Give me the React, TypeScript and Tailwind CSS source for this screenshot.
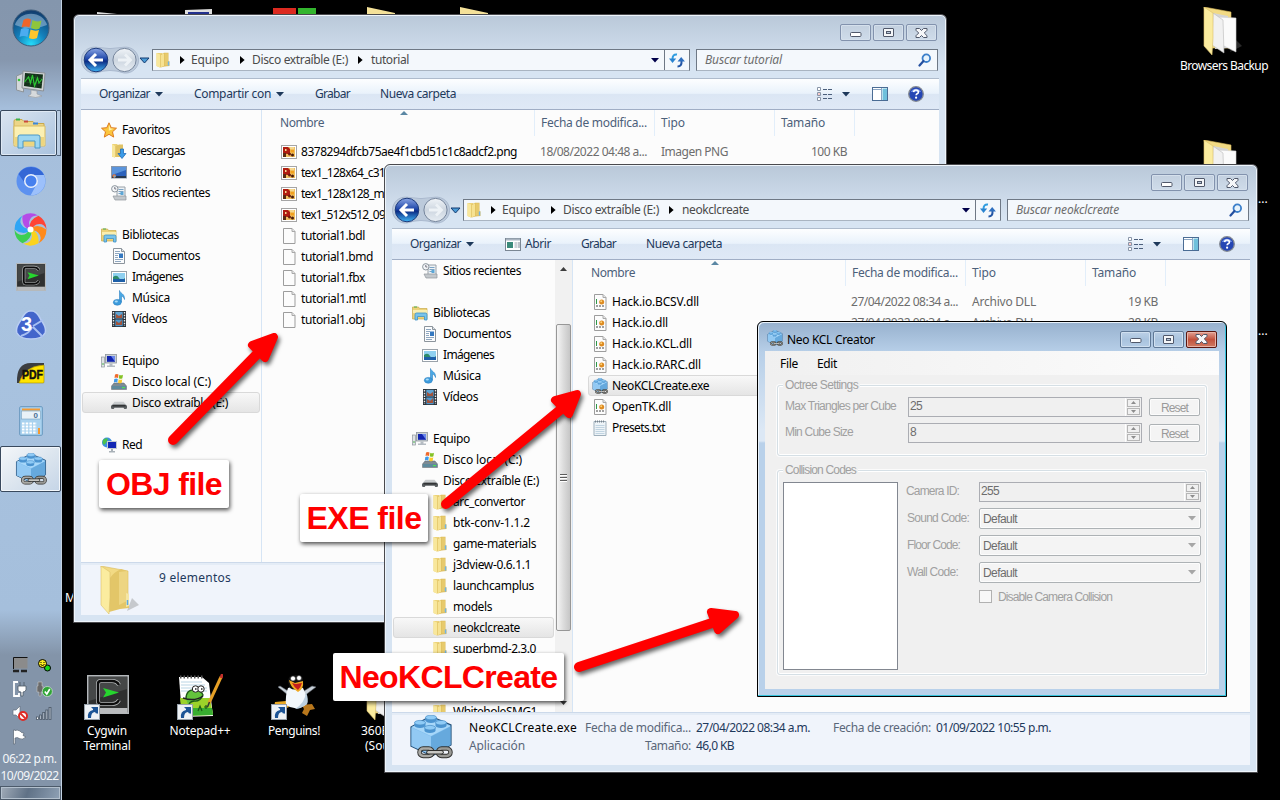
import React, { useLayoutEffect, useRef, useState } from "react";

/* Text set to an exact advance width by spreading the difference over its letters. */
function T({ w, className = "", children }: { w?: number; className?: string; children: string }) {
  const ref = useRef<HTMLSpanElement>(null);
  const [ls, setLs] = useState(0);
  useLayoutEffect(() => {
    if (!w || !ref.current) return;
    const natural = ref.current.getBoundingClientRect().width - ls * children.length;
    setLs((w - natural) / children.length);
  }, [w, children]);
  return (
    <span ref={ref} className={`inline-block shrink-0 whitespace-pre ${className}`} style={{ letterSpacing: ls }}>
      {children}
    </span>
  );
}

/* ---------- small icons ---------- */

const Folder = ({ s = 16 }: { s?: number }) => (
  <svg width={s} height={s} viewBox="0 0 16 16" className="shrink-0">
    <path d="M1.500 1h5.500v13.500L5 15.500 1.500 14z" fill="#ecd278" />
    <path d="M1.500 1L5 2.500v13L1.500 14z" fill="#f8e79c" />
    <path d="M5.500 2.500L9 .8h4.500v8.500h1V14l-5 .5-4 1z" fill="#dcbb5a" />
    <path d="M5.800 3L9 1.300V14l-3.200 1.300z" fill="#f6e292" />
    <path d="M9.500 1.300H13V13.500H9.500z" fill="#e7ca6c" />
    <path d="M12.800 9.500h1.400v4h-1.400z" fill="#6fb4e6" />
  </svg>
);

const Star = () => (
  <svg width="16" height="16" viewBox="0 0 16 16" className="shrink-0">
    <path d="M8 .8l2.200 4.900 5.300.5-4 3.600 1.200 5.300L8 12.300l-4.700 2.800 1.200-5.300-4-3.600 5.300-.5z" fill="#fbc63e" stroke="#dd7a1e" strokeWidth="1" />
    <path d="M8 2.800l1.400 3.600 3.400.3-5 2z" fill="#fff0a8" />
  </svg>
);

const Download = () => (
  <svg width="16" height="16" viewBox="0 0 16 16" className="shrink-0">
    <path d="M1 1h5l1 1h5v12H1z" fill="#ecd278" />
    <path d="M1 1l3 2v12l-3-1.500z" fill="#f8e79c" />
    <path d="M4.500 3L8 1.500h4V14H4.500z" fill="#e0c264" />
    <path d="M9.500 6h3v4.500H15l-4 5-4-5h2.500z" fill="#3b9be8" stroke="#1f6cb8" strokeWidth=".8" />
  </svg>
);

const Desktop = () => (
  <svg width="16" height="16" viewBox="0 0 16 16" className="shrink-0">
    <rect x=".5" y="2.500" width="15" height="11.500" fill="#2b61bb" stroke="#8a97a8" />
    <path d="M1 3h14v3L1 11z" fill="#5a94dc" />
    <rect x="1" y="12" width="14" height="2" fill="#27384f" />
    <circle cx="3.200" cy="12" r="1.800" fill="#ef7b35" />
    <circle cx="3.600" cy="12.500" r=".9" fill="#56b6f2" />
  </svg>
);

const Recent = () => (
  <svg width="16" height="16" viewBox="0 0 16 16" className="shrink-0">
    <path d="M6 2h8v11H6z" fill="#eef2f5" stroke="#98a0a8" />
    <path d="M7.500 4.500h5M7.500 6.500h5M7.500 8.500h3" stroke="#7ba3c4" />
    <rect x="9.500" y="7" width="3" height="3" fill="#5da7d6" />
    <path d="M2 11h13v4H4z" fill="#c3c8cc" stroke="#8f969c" strokeWidth=".7" />
    <circle cx="3.800" cy="3.800" r="3.200" fill="#f4f6f8" stroke="#8b949c" />
    <path d="M3.800 2v2h1.500" stroke="#556" fill="none" strokeWidth=".8" />
  </svg>
);

const Library = () => (
  <svg width="16" height="16" viewBox="0 0 16 16" className="shrink-0">
    <path d="M.5 2h6l1 1.500H15V14H.5z" fill="#ecd279" stroke="#c9aa4a" strokeWidth=".7" />
    <path d="M2 2h3" stroke="#4caf50" />
    <path d="M1 5h14v3H1z" fill="#faeeb0" />
    <path d="M3 15V9.500Q3 8 4.500 8h9Q15 8 15 9.500V15h-2.500v-3.500h-7V15z" fill="#79c3ea" stroke="#3f92c6" strokeWidth=".8" />
  </svg>
);

const Doc = () => (
  <svg width="16" height="16" viewBox="0 0 16 16" className="shrink-0">
    <path d="M2.500.5h8l3 3v12h-11z" fill="#fbfcfd" stroke="#8c949c" />
    <path d="M10.500.5v3h3" fill="#dde3e8" stroke="#8c949c" />
    <path d="M4 3.500h5M4 5.500h4M4 7.500h3M4 9.500h3M4 11.500h8M4 13.500h6" stroke="#8fa7c0" />
    <rect x="8" y="5.500" width="4" height="4.500" fill="#3478c0" />
  </svg>
);

const Picture = () => (
  <svg width="16" height="16" viewBox="0 0 16 16" className="shrink-0">
    <rect x=".5" y="2.500" width="15" height="12" fill="#fff" stroke="#9aa2aa" />
    <rect x="2" y="4" width="12" height="9" fill="#8fd0f0" />
    <path d="M2 8q4-3 6 1t6 0v1H2z" fill="#2c8a6a" />
    <path d="M2 10h12v3H2z" fill="#1d5fa8" />
  </svg>
);

const Music = () => (
  <svg width="16" height="16" viewBox="0 0 16 16" className="shrink-0">
    <path d="M8.500.5c.5 3 5.500 3 5 9-.6-2-1.500-3-3-3.200V12h-2z" fill="#4aa8e4" stroke="#2b82c2" strokeWidth=".6" />
    <ellipse cx="6.300" cy="12.300" rx="4" ry="2.900" fill="#3d9bdc" stroke="#2b82c2" strokeWidth=".6" />
    <ellipse cx="5.300" cy="11.500" rx="1.600" ry="1" fill="#a8dbf8" />
  </svg>
);

const Video = () => (
  <svg width="16" height="16" viewBox="0 0 16 16" className="shrink-0">
    <rect x="1" y="0" width="14" height="16" fill="#2c3238" />
    <path d="M2.500 1v14M13.500 1v14" stroke="#e8ecef" strokeDasharray="1.500 1.200" strokeWidth="1.400" />
    <rect x="4.300" y=".8" width="7.400" height="6.700" fill="#5fa4d4" />
    <rect x="4.300" y="8.500" width="7.400" height="6.700" fill="#4f98cc" />
    <path d="M5 3l3 2 3-2v4H5zM5 10l3 2 3-3v5H5z" fill="#a2543c" />
  </svg>
);

const Computer = () => (
  <svg width="16" height="16" viewBox="0 0 16 16" className="shrink-0">
    <rect x=".5" y="4" width="3" height="10" fill="#dfe3e6" stroke="#8d959c" strokeWidth=".7" />
    <circle cx="2" cy="11" r=".8" fill="#3aad3a" />
    <rect x="4.500" y="1.500" width="11" height="8.500" fill="#c9d0d6" stroke="#8d959c" strokeWidth=".8" />
    <rect x="6" y="3" width="8" height="5.800" fill="#1225b0" />
    <path d="M10 3h4v5.800z" fill="#6a86ea" />
    <path d="M8.500 10.500h3v2h2.500v1.500H6v-1.500h2.500z" fill="#b4bbc2" />
  </svg>
);

const Drive = ({ win }: { win?: boolean }) => (
  <svg width="16" height="16" viewBox="0 0 16 16" className="shrink-0">
    {win ? (
      <>
        <path d="M3 9h10l2.500 3v3.500H.5V12z" fill="#7d8b94" stroke="#5c676e" strokeWidth=".5" />
        <path d="M1 12h14v3H1z" fill="#5f8a9c" />
        <rect x="11" y="13" width="3" height="1.200" fill="#52e052" />
        <path d="M4 .5q2-1 3.500 0L7 4q-2-1-3.500 0z" fill="#ef6a2c" />
        <path d="M8.300.8q2 1 3.700 0l-.6 3.500q-1.700 1-3.600 0z" fill="#84c225" />
        <path d="M3.300 5q2-1 3.500 0l-.5 3.500q-2-1-3.500 0z" fill="#3f9bea" />
        <path d="M7.600 5.300q2 1 3.700 0l-.6 3.500q-1.700 1-3.600 0z" fill="#fbca2d" />
      </>
    ) : (
      <>
        <path d="M3.500 6.800h9l3 3.500H.5z" fill="#c9ccce" />
        <path d="M0 11q.5-1.500 2.500-1.500h11Q15.500 9.500 16 11v2q0 1-1.500 1h-1.200l-.8-1.200H3.500L2.700 14H1.500Q0 14 0 13z" fill="#5a5e61" />
        <path d="M1.500 10.800h13" stroke="#2b2d2f" strokeWidth="1.300" />
      </>
    )}
  </svg>
);

const Network = () => (
  <svg width="16" height="16" viewBox="0 0 16 16" className="shrink-0">
    <circle cx="6" cy="5.500" r="5" fill="#3c8fe0" />
    <path d="M2 3q3-3 5-1L5 6 3 8 1.500 6z" fill="#4cc24c" />
    <rect x="6.500" y="4.500" width="9" height="7" fill="#1428b4" stroke="#c5ccd2" />
    <path d="M10 12h2v2h2v1.500H8V14h2z" fill="#a9b1b8" />
  </svg>
);

const Png = () => (
  <svg width="16" height="16" viewBox="0 0 16 16" className="shrink-0">
    <rect x=".5" y="1.500" width="15" height="13" fill="#fff" stroke="#a5a5a5" />
    <rect x="2" y="3" width="12" height="10" fill="#f0c060" />
    <path d="M2 3h5l2 2v5H6L2 9z" fill="#b01c10" />
    <path d="M2 9h3v4H2z" fill="#5a2a10" />
    <circle cx="11.500" cy="11" r="1.500" fill="#4a1c08" />
    <circle cx="8.500" cy="10" r="1.500" fill="#6d1a0c" />
    <path d="M4 5h1.500v2H4zM9 3h4v2H9z" fill="#f6d890" />
    <path d="M9.500 6h3.500v2.500H9.500z" fill="#f2a01e" />
  </svg>
);

const Blank = () => (
  <svg width="16" height="16" viewBox="-1 0 16 16" className="shrink-0">
    <path d="M1.500.5h8.500l3 3v12H1.500z" fill="#fcfcfc" stroke="#9d9d9d" />
    <path d="M10 .5v3h3" fill="#e6e6e6" stroke="#a8a8a8" />
  </svg>
);

const Dll = () => (
  <svg width="16" height="16" viewBox="-1 0 16 16" className="shrink-0">
    <path d="M1.500.5h8.500l3 3v12H1.500z" fill="#fcfcfc" stroke="#9d9d9d" />
    <path d="M10 .5v3h3" fill="#e6e6e6" stroke="#a8a8a8" />
    <path d="M3.500 5v5" stroke="#2f9a48" />
    <path d="M3 12h9" stroke="#444" strokeDasharray="2 1" />
    <circle cx="8.700" cy="8" r="2.500" fill="#dd8a20" />
    <circle cx="8.200" cy="7.200" r="1" fill="#fbd27a" />
  </svg>
);

const Txt = () => (
  <svg width="16" height="16" viewBox="0 0 16 16" className="shrink-0">
    <path d="M2 1.500h12v14H2z" fill="#eef4f8" stroke="#9fb0bc" />
    <path d="M3 1.500h10" stroke="#77828c" strokeDasharray="1 1" strokeWidth="2" />
    <path d="M3.500 5.500h9M3.500 7.500h9M3.500 9.500h9M3.500 11.500h9M3.500 13.500h9" stroke="#b5ccdb" strokeWidth=".8" />
  </svg>
);

const Lego = ({ s }: { s: number }) => (
  <svg width={s} height={s} viewBox="0 0 44 44" className="shrink-0">
    <path d="M2 12L18 3h8l16 7v20L23 41 2 31z" fill="#7fbdee" stroke="#24527c" strokeWidth="1.200" />
    <path d="M2.500 12.500l19.500 9V40L2.500 31z" fill="#92c9f3" />
    <path d="M22 21.500l19.500-10V30L22 40.500z" fill="#66a9dd" />
    <path d="M2.500 12L21 3.500l20.500 7.500L22 21z" fill="#a7d7f9" />
    {[[22, 3.800], [11, 9], [32, 9], [21, 14]].map(([x, y]) => (
      <g key={`${x}-${y}`}>
        <path d={`M${x - 5.500} ${y - 1.500}v3a5.500 2.600 0 0 0 11 0v-3z`} fill="#4b94d0" />
        <ellipse cx={x} cy={y - 1.300} rx="5.500" ry="2.300" fill="#8fcbf6" stroke="#4b8fc9" strokeWidth=".7" />
      </g>
    ))}
    <g fill="none">
      <rect x="10.500" y="33.500" width="13" height="7.500" rx="3.700" stroke="#30302e" strokeWidth="4.500" />
      <rect x="29" y="33.500" width="12.500" height="7.500" rx="3.700" stroke="#30302e" strokeWidth="4.500" />
      <rect x="10.500" y="33.500" width="13" height="7.500" rx="3.700" stroke="#a9a9a5" strokeWidth="2.700" />
      <rect x="29" y="33.500" width="12.500" height="7.500" rx="3.700" stroke="#999995" strokeWidth="2.700" />
      <path d="M19.500 37.200h13" stroke="#30302e" strokeWidth="4.500" strokeLinecap="round" />
      <path d="M19.500 37.200h13" stroke="#c8c8c4" strokeWidth="2.500" strokeLinecap="round" />
    </g>
  </svg>
);

const Tri = ({ c = "#1e395b" }: { c?: string }) => (
  <svg width="8" height="5" viewBox="0 0 8 5" className="shrink-0">
    <path d="M0 0h8L4 4.600z" fill={c} />
  </svg>
);

const Crumb = () => (
  <svg width="5" height="8" viewBox="0 0 5 8" className="shrink-0">
    <path d="M0 0l4.600 4L0 8z" fill="#000" />
  </svg>
);

/* ---------- window parts ---------- */

function CaptionButtons({ active = false }: { active?: boolean }) {
  const base = "flex h-[17px] w-[31px] items-center justify-center rounded-[2px] border";
  const face = active
    ? "border-[#5f7896] bg-linear-to-b from-[#bcd0e6] via-[#a9c3de] to-[#b5cde6] shadow-[inset_0_0_0_1px_#d0e0f0]"
    : "border-[#8292ad] bg-linear-to-b from-[#c3d0df] to-[#cfdcea] shadow-[inset_0_0_0_1px_#d5e0ec]";
  const close = active
    ? "border-[#5c1710] bg-linear-to-b from-[#e2a093] via-[#c2513c] to-[#cf7a62] shadow-[inset_0_0_0_1px_#e8b3a6]"
    : face;
  return (
    <div className="flex gap-[2px]">
      <div className={`${base} ${face}`}>
        <svg width="12" height="6" viewBox="0 0 12 6" className="mt-[4px]">
          <rect x=".5" y=".5" width="10.500" height="4" rx="1" fill="#fff" stroke="#50586a" />
        </svg>
      </div>
      <div className={`${base} ${face}`}>
        <svg width="11" height="9" viewBox="0 0 11 9">
          <rect x=".5" y=".5" width="10" height="8" rx=".5" fill="#f4f6f8" stroke="#50586a" />
          <rect x="3.500" y="3.500" width="4" height="2" fill="#b8c8da" stroke="#50586a" />
        </svg>
      </div>
      <div className={`${base} ${close}`}>
        <svg width="13" height="10" viewBox="0 0 13 10">
          <path d="M1 .5h3.500l2 2 2-2H12v1.800L9.300 5 12 7.700v1.800H8.500l-2-2-2 2H1V7.700L3.700 5 1 2.300z" fill="#f6f7f9" stroke="#50586a" />
        </svg>
      </div>
    </div>
  );
}

const NavButtons = ({ id }: { id: string }) => (
  <svg width="71" height="28" viewBox="0 0 71 28" className="-my-[3px] shrink-0">
    <defs>
      <linearGradient id={id} x1="0" y1="0" x2="0" y2="1">
        <stop offset="0" stopColor="#8aa5e4" />
        <stop offset=".45" stopColor="#2149ab" />
        <stop offset=".55" stopColor="#0b2b85" />
        <stop offset="1" stopColor="#3fb4f4" />
      </linearGradient>
      <linearGradient id={`${id}f`} x1="0" y1="0" x2="0" y2="1">
        <stop offset="0" stopColor="#f0f4f8" />
        <stop offset=".5" stopColor="#cdd6e0" />
        <stop offset="1" stopColor="#e7edf3" />
      </linearGradient>
    </defs>
    <path d="M15 1.200Q29 4 43 1.200A13 13 0 1 1 43 27Q29 22 15 27A13 13 0 1 1 15 1.200z" fill="#bccadb" stroke="#a3b3c9" strokeWidth=".8" />
    <circle cx="15" cy="14" r="11.800" fill={`url(#${id})`} stroke="#1d3b7c" strokeWidth="1" />
    <path d="M22 14H10M15 8l-6 6 6 6" stroke="#fff" strokeWidth="3" fill="none" />
    <circle cx="43.500" cy="14" r="11.600" fill={`url(#${id}f)`} stroke="#75859c" strokeWidth="1" />
    <path d="M37 14h11M44 8.500l5.500 5.500-5.500 5.500" stroke="#edf2f6" strokeWidth="2.800" fill="none" />
    <path d="M59 12h9l-4.500 5z" fill="#4a9bd6" stroke="#123a70" strokeWidth="1" />
  </svg>
);

type Nav = { l: number; icon: React.ReactNode; text: string; w: number; sel?: boolean } | null;
type FileRow = { icon: React.ReactNode; name: string; w: number; date?: string; type?: string; tw?: number; size?: string; sw?: number; sel?: boolean };

function Explorer(p: {
  id: string;
  className: string;
  folder: string;
  fw: number;
  sw: number;
  tools: React.ReactNode;
  nav: Nav[];
  navTop: string;
  scroll?: React.ReactNode;
  files: FileRow[];
  details: React.ReactNode;
}) {
  const indents = ["pl-[20px]", "pl-[30px]", "pl-[40px]"];
  return (
    <div
      className={`absolute flex h-[609px] w-[874px] flex-col rounded-t-[6px] border border-[#4a4a4e] bg-[#d7e4f1] bg-[linear-gradient(180deg,#b9c8d9_0px,#d7e4f2_52px)] px-[7px] pb-[7px] shadow-[inset_0_0_0_1px_#eef5fb] ${p.className}`}
    >
      <div className="flex h-[34px] shrink-0 justify-end pt-[9px] pr-[2px]">
        <CaptionButtons />
      </div>
      <div className="flex h-[22px] shrink-0 items-center">
        <NavButtons id={p.id} />
        <div className="flex h-[22px] w-[538px] items-center border border-[#6e7885] border-b-[#a9b4c1] bg-[#f4f8fc] pl-[2px] text-[#4b4b4b]">
          <Folder />
          <div className="ml-[9px] flex w-[11px]"><Crumb /></div>
          <T w={38}>Equipo</T>
          <div className="ml-[11px] flex w-[12px]"><Crumb /></div>
          <T w={96}>Disco extraíble (E:)</T>
          <div className="ml-[10px] flex w-[13px]"><Crumb /></div>
          <T w={p.fw}>{p.folder}</T>
          <div className="ml-auto flex h-full w-[38px] items-center justify-between">
            <div className="flex h-full w-[14px] items-center border-r border-[#6e7885] pl-0"><Tri c="#00004a" /></div>
            <svg width="24" height="16" viewBox="0 0 24 16">
              <path d="M12 2.500q-4.500-.5-4.500 4.500" fill="none" stroke="#2f9de0" strokeWidth="2" />
              <path d="M4 6.500h7.200L7.500 11z" fill="#2b84d0" />
              <path d="M12.500 14.500q4.500 0 4-5.500" fill="none" stroke="#2456a5" strokeWidth="2" />
              <path d="M12.500 9.500h7.400l-3.700-4.500z" fill="#2e6fbf" />
            </svg>
          </div>
        </div>
        <div className="ml-[6px] flex h-[22px] w-[242px] items-center justify-between border border-[#6e7885] border-b-[#a9b4c1] bg-[#f4f8fc] pr-[5px] pl-[8px] text-[#6d6d6d] italic">
          <T w={p.sw}>{`Buscar ${p.folder}`}</T>
          <svg width="14" height="14" viewBox="0 0 14 14">
            <circle cx="8.300" cy="5.200" r="3.800" fill="#e6f3fc" stroke="#3b7fca" strokeWidth="1.800" />
            <path d="M5.500 8L1.500 12.500" stroke="#2450a0" strokeWidth="2.200" strokeLinecap="round" />
          </svg>
        </div>
      </div>
      <div className="mt-[7px] flex h-[32px] shrink-0 items-center border-t border-b border-t-[#aebbcc] border-b-[#a0aec5] bg-[linear-gradient(180deg,#fdfeff_0%,#e9f2fb_48%,#dbe6f4_50%,#dfe9f6_100%)] pr-[15px] pl-[18px] text-[#1e395b]">
        {p.tools}
        <div className="ml-auto flex items-center">
          <svg width="16" height="14" viewBox="0 0 16 14">
            <g fill="#fff" stroke="#8a96a8">
              <path d="M.5.5h3v3h-3zM.5 5.500h3v3h-3zM.5 10.500h3v3h-3z" />
            </g>
            <path d="M6 2.500h4M11 2.500h4M6 7.500h4M11 7.500h4M6 11.500h4M11 11.500h4" stroke="#4b5f7c" />
            <path d="M1.500 6.500h1v1h-1z" fill="#d33" />
          </svg>
          <div className="ml-[9px] flex"><Tri /></div>
          <svg width="16" height="14" viewBox="0 0 16 14" className="ml-[22px]">
            <rect x=".5" y=".5" width="15" height="13" fill="#fff" stroke="#4a6c94" />
            <path d="M1 2.500h9M9.500 1v12" stroke="#8ba6c4" />
            <rect x="10.500" y="1.500" width="4.500" height="11.500" fill="#6fc0dc" />
          </svg>
          <svg width="16" height="16" viewBox="0 0 16 16" className="ml-[20px]">
            <circle cx="8" cy="8" r="7.300" fill="#2546b4" stroke="#838992" strokeWidth="1.300" />
            <path d="M2.800 6a5.500 5 0 0 1 10.400 0z" fill="#6d8be0" />
            <path d="M5.600 6.200q.2-2.200 2.400-2.200t2.400 1.900q0 1.200-1.300 1.900-.9.500-.9 1.400" fill="none" stroke="#fff" strokeWidth="1.700" />
            <circle cx="8.100" cy="11.700" r="1.100" fill="#fff" />
          </svg>
        </div>
      </div>
      <div className="flex h-[452px] shrink-0 bg-[#fcfcfc]">
        <div className="flex w-[181px] shrink-0 border-r border-[#d6e5f5]">
          <div className={`flex flex-1 flex-col overflow-hidden text-black ${p.navTop}`}>
            {p.nav.map((n, i) =>
              n ? (
                <div key={i} className="relative flex h-[21px] shrink-0 items-center">
                  {n.sel && <div className="absolute inset-y-0 right-[1px] left-[1px] rounded-[3px] border border-[#d9d9d9] bg-linear-to-b from-[#f8f8f8] to-[#e5e5e5]" />}
                  <div className={`relative flex items-center ${indents[n.l]}`}>
                    {n.icon}
                    <T w={n.w} className="ml-[5px]">{n.text}</T>
                  </div>
                </div>
              ) : (
                <div key={i} className="h-[21px] shrink-0" />
              )
            )}
          </div>
          {p.scroll}
        </div>
        <div className="flex min-w-0 flex-1 flex-col">
          <div className="relative flex h-[31px] shrink-0 text-[#4c607a]">
            <div className="absolute top-[1px] left-[138px] border-x-[4px] border-b-[4px] border-x-transparent border-b-[#5b87a4]" />
            <div className="flex h-[26px] w-[273px] items-center border-r border-[#e2eefa] pl-[18px]"><T w={44}>Nombre</T></div>
            <div className="flex h-[26px] w-[120px] items-center border-r border-[#e2eefa] pl-[6px]"><T w={106}>Fecha de modifica...</T></div>
            <div className="flex h-[26px] w-[120px] items-center border-r border-[#e2eefa] pl-[6px]"><T w={24}>Tipo</T></div>
            <div className="flex h-[26px] w-[80px] items-center border-r border-[#e2eefa] pl-[6px]"><T w={44}>Tamaño</T></div>
          </div>
          {p.files.map((f) => (
            <div key={f.name} className="relative flex h-[21px] shrink-0 items-center text-[#6d6d6d]">
              {f.sel && <div className="absolute inset-y-0 left-[15px] h-[21px] w-[578px] rounded-[3px] border border-[#d9d9d9] bg-linear-to-b from-[#f8f8f8] to-[#e5e5e5]" />}
              <div className="relative flex w-[278px] items-center pl-[19px]">
                {f.icon}
                <T w={f.w} className="ml-[4px] text-black">{f.name}</T>
              </div>
              <div className="w-[121px]">{f.date && <T w={107}>{f.date}</T>}</div>
              <div className="w-[120px]">{f.type && <T w={f.tw}>{f.type}</T>}</div>
              <div className="flex w-[66px] justify-end">{f.size && <T w={f.sw}>{f.size}</T>}</div>
            </div>
          ))}
        </div>
      </div>
      <div className="flex h-[53px] shrink-0 items-start border-t border-[#ccd9ea] bg-[#f0f4fb] shadow-[inset_0_2px_0_#e4ecf6]">{p.details}</div>
    </div>
  );
}

/* ---------- desktop icons ---------- */

const Shortcut = () => (
  <svg width="16" height="16" viewBox="0 0 16 16" className="absolute bottom-0 left-0">
    <rect x=".5" y=".5" width="15" height="15" fill="#eef2f6" stroke="#98a2ac" />
    <path d="M4 14q-1-7 5-8V3h5v6l-2 .5-1-1.500q-4 0-4 6z" fill="#1c5496" />
    <path d="M7 3h7v7z" fill="#1c5496" />
  </svg>
);

const Cyg = ({ w, h }: { w: number; h: number }) => (
  <svg width={w} height={h} viewBox="0 0 42 39" preserveAspectRatio="none">
    <rect x=".7" y=".7" width="40.600" height="37.600" fill="#2f3030" stroke="#b4b8bb" strokeWidth="1.600" />
    <rect x="1.500" y="33" width="39" height="5" fill="#b9bbbd" />
    <path d="M2 2h38v12L2 26z" fill="#454747" />
    <path d="M32 10q-2-4-7-4H14q-3 0-3 3v17q0 3 3 3h11q5 0 7-4" fill="none" stroke="#b4b7b8" strokeWidth="4" />
    <path d="M32 10q-2-4-7-4H14q-3 0-3 3v17q0 3 3 3h11q5 0 7-4" fill="none" stroke="#0c0c0c" strokeWidth="2.400" />
    <path d="M16 13l16 4.500-16 5 3-5z" fill="#26d62e" />
  </svg>
);

const BigFolder = ({ docs = true }: { docs?: boolean }) => (
  <svg width="40" height="48" viewBox="0 0 40 48">
    <path d="M28 45l12-6-7-7z" fill="#777" opacity=".35" />
    <path d="M2 0l27 5v36H10z" fill="#f2da84" stroke="#d8bb5c" strokeWidth=".6" />
    {docs && (
      <>
        <path d="M11 6l15 3v32l-13 1z" fill="#d5d5d5" />
        <path d="M16 10l18 1v34l-14-7z" fill="#fbfbfb" stroke="#cfcfcf" strokeWidth=".6" />
        <path d="M11 6l10 7 1 33-12-8z" fill="#f1f1f1" stroke="#b9b9b9" strokeWidth=".6" />
      </>
    )}
    {!docs && (
      <>
        <path d="M11 12Q15 6 22 3l6 2v30l2-2v9l-9 1-11 3z" fill="#e3c668" />
        <path d="M20 6l8-1v30l-8 4z" fill="#edd582" />
        <path d="M27 27l3 1v12l-3 1z" fill="#f5e6a4" />
        <path d="M28.500 34v5" stroke="#5ba9e4" strokeWidth="1.500" />
      </>
    )}
    <path d="M2 0l9 6v25l-1 17-8-9z" fill="#fbec9f" stroke="#dcc169" strokeWidth=".6" />
  </svg>
);

const Orb = () => (
  <svg width="38" height="38" viewBox="0 0 38 38">
    <defs>
      <radialGradient id="orb" cx=".5" cy=".95" r=".9">
        <stop offset="0" stopColor="#25dcfa" />
        <stop offset=".45" stopColor="#1380bb" />
        <stop offset="1" stopColor="#123f70" />
      </radialGradient>
    </defs>
    <circle cx="19" cy="19" r="18" fill="url(#orb)" stroke="#3e5c7a" />
    <path d="M3 16a16.500 15 0 0 1 32 0q-16 7-32 0z" fill="#a5c3dc" opacity=".55" />
    <path d="M11.500 11q4-2.500 7.500-.5l-1.500 8q-4-2-8 0z" fill="#f0652a" />
    <path d="M20.500 11q4 2.500 9 .5l-2 8q-4 2-8.500-.5z" fill="#8fc63c" />
    <path d="M9 20q4-2 8 0l-1.500 8q-4-2-8 0z" fill="#4bacf0" />
    <path d="M18.500 20.500q4.500 2 8.500.5l-2 8q-4 2-8 0z" fill="#fdc62e" />
  </svg>
);

const TaskMgr = () => (
  <svg width="32" height="30" viewBox="0 0 32 30" className="mt-[3px]">
    <path d="M1.500 6l7-3v19l-7-2z" fill="#d4d8db" stroke="#8e9499" />
    <circle cx="4" cy="10" r="1.300" fill="#3bc23b" />
    <path d="M8 1l22 2-1.500 18L7 18z" fill="#cfd3d5" stroke="#8c9196" />
    <path d="M10 3l18 1.500-1.500 14L9 16z" fill="#14301a" />
    <path d="M10 7l18 1.500M10 12l17 1.500M15 3v14M21 4v14" stroke="#2a5a34" strokeWidth=".6" />
    <path d="M9.500 12l4-5 2 6 2-8 2 11 3-8 1.500 5 3-4" fill="none" stroke="#2cc832" strokeWidth="1.200" />
    <path d="M16 20l6 1v3l5 2q-6 3-14 0l3-2z" fill="#d7dadc" stroke="#94999d" strokeWidth=".6" />
  </svg>
);

const ExplorerTask = () => (
  <svg width="34" height="32" viewBox="0 0 34 32">
    <path d="M2 4q0-1.500 2-1.500h6l2 2h9l2 2h9v20H2z" fill="#ecd587" stroke="#c9a94c" />
    <path d="M4 2.500h4" stroke="#3cb04a" strokeWidth="2" />
    <path d="M12 4.500h4" stroke="#cc4a38" strokeWidth="2" />
    <path d="M21 6.500h5" stroke="#3a87d8" strokeWidth="2" />
    <path d="M2 9h31v20H2z" fill="#fbf0b3" stroke="#dabd62" />
    <path d="M3 20h29v8H3z" fill="#eed67e" />
    <path d="M6 31V20q0-2 2-2h18q2 0 2 2v11h-5v-7H11v7z" fill="#9cd6f1" stroke="#4a98c6" />
  </svg>
);

const Chromium = () => (
  <svg width="30" height="30" viewBox="0 0 30 30">
    <circle cx="15" cy="15" r="14.500" fill="#5c91f0" />
    <path d="M2.500 8A14.500 14.500 0 0 1 28 9H15a6.500 6.500 0 0 0-6.200 8z" fill="#3467d6" />
    <path d="M28 9a14.500 14.500 0 0 1-13.500 20.500L20.800 18A6.500 6.500 0 0 0 18.500 9z" fill="#9cc0fb" />
    <circle cx="15" cy="15" r="7" fill="#e9f0fc" />
    <circle cx="15" cy="15" r="5.500" fill="#4680ee" />
  </svg>
);

const PINWHEEL = ["#ff4436", "#ff8a1c", "#fbd31e", "#3ccf52", "#2fa5f5", "#b44be8"];
const Pinwheel = () => (
  <svg width="33" height="33" viewBox="-16.5 -16.5 33 33">
    {PINWHEEL.map((c, i) => (
      <path key={c} d="M-1-2Q-1-10 8-13.800A16 16 0 0 1 16 0Q13-7 6-5Q3-4 1.500 0z" fill={c} transform={`rotate(${i * 60})`} />
    ))}
    <circle r="3" fill="#fff" />
  </svg>
);

const Three = () => (
  <svg width="32" height="30" viewBox="0 0 32 30">
    <path d="M16 .8Q22 1 26 10q6 8 4 13-3 6-14 6T2 23Q0 18 6 10 10 1 16 .8z" fill="#4365cb" stroke="#b9cdf2" strokeWidth="1.500" />
    <path d="M18 16L28 10M18 17l10 10M17 17q-2 6-11 9" stroke="#a9c0f2" strokeWidth="2" fill="none" />
    <text x="6" y="21" fontSize="20" fontWeight="bold" fill="#fff" fontFamily="Liberation Sans">3</text>
  </svg>
);

const Pdf = () => (
  <svg width="29" height="22" viewBox="0 0 29 22">
    <path d="M1 21Q0 1 15 1h13v3Q11 3 3 21z" fill="#3b3d40" />
    <path d="M3 21Q8 4 28 3v17q0 1-1 1z" fill="#ffe400" stroke="#a48a00" strokeWidth=".6" />
    <text x="6" y="17" fontSize="12" fontWeight="bold" fill="#111" stroke="#111" strokeWidth=".5" fontFamily="Liberation Sans" textLength="21" lengthAdjust="spacingAndGlyphs">PDF</text>
  </svg>
);

const Calc = () => (
  <svg width="24" height="30" viewBox="0 0 24 30">
    <rect x=".7" y=".7" width="22.600" height="28.600" rx="1" fill="#a9d2ef" stroke="#6696bd" />
    <path d="M3 3.500h18" stroke="#f49a32" strokeWidth="2" />
    <rect x="2.500" y="5" width="19" height="8" fill="#e9f2f8" stroke="#7ba2c0" strokeWidth=".6" />
    <text x="14.500" y="12" fontSize="8" fontWeight="bold" fill="#4a6f92" fontFamily="Liberation Sans">0</text>
    <path d="M3 17.500h15M3 20.500h15M3 23.500h15M3 26.500h15" stroke="#fff" strokeWidth="2" strokeDasharray="2.500 1.200" />
    <path d="M20 22v6" stroke="#f49a32" strokeWidth="2" />
  </svg>
);

const Penguin = () => (
  <svg width="48" height="44" viewBox="0 0 48 44">
    <path d="M17 17L9 12l-2 1 10 8zM33 17l8-5 4 1-12 9z" fill="#c8d0d8" stroke="#5d656d" strokeWidth=".6" />
    <path d="M4 28l11-1 3 6-7 3-8-3z" fill="#e8a722" />
    <path d="M31 31l10-1 3 5-5 1-3 6-5-3 2-4z" fill="#b8771c" />
    <path d="M17 14q8-3 15 0 5 10 4 16-11 8-21 1-1-9 2-17z" fill="#f2f7fb" />
    <path d="M35 18q3 8 1 12-6 5-12 5 10-6 11-17z" fill="#bcd0e0" />
    <path d="M17 8q0-8 8-7t7 5l-2 8q-7 3-11 0z" fill="#111" />
    <circle cx="22" cy="4.500" r="2.500" fill="#fff" stroke="#222" strokeWidth=".6" />
    <circle cx="28" cy="4" r="2.500" fill="#fff" stroke="#222" strokeWidth=".6" />
    <path d="M18 6l6 3 8-2q1 8-5 11Q19 13 18 6z" fill="#f0a921" />
    <path d="M21 9l4 1 6-1q-1 4-4 7-4-3-6-7z" fill="#c51d1d" />
  </svg>
);

const Notepad = () => (
  <svg width="46" height="44" viewBox="0 0 46 44">
    <path d="M2 3h23l7 6 4 33-31 1z" fill="#fff" />
    <path d="M3 3h24" stroke="#555" strokeWidth="3" strokeDasharray="1.500 2" />
    <path d="M4 8h21M4 11h24M4 14h26M4 17h26" stroke="#b2d0e2" strokeWidth=".9" />
    <path d="M3 24h30l3 17-31 1z" fill="#9cd22a" />
    <path d="M5 34h30l1 7-31 1z" fill="#38ad30" />
    <path d="M9 25q0-10 9-9 6 0 8 5-3 7-9 6-6 1-5 6" fill="#63c33c" stroke="#1e5a16" strokeWidth="1.400" />
    <circle cx="18.500" cy="15" r="3.200" fill="#fff" stroke="#222" />
    <circle cx="24" cy="15" r="3.200" fill="#fff" stroke="#222" />
    <path d="M18 15h1.500M24 15h1.500M6 24q12 4 20-2" stroke="#222" fill="none" strokeWidth="1.500" />
    <path d="M21 37l2-5 2 5M27 33h4M29 31v4" stroke="#1e5a16" fill="none" strokeWidth="1.200" />
    <path d="M44 3L32 29" stroke="#e6a026" strokeWidth="3" />
    <path d="M45.500 0L44 4" stroke="#c4302a" strokeWidth="3" />
    <path d="M32.500 28l-2 5" stroke="#333" strokeWidth="1.500" />
  </svg>
);

/* ---------- form controls ---------- */

const Spin = () => (
  <div className="flex h-full w-[16px] flex-col gap-px border-l border-white p-px">
    {[0, 1].map((i) => (
      <div key={i} className="flex flex-1 items-center justify-center border border-[#b6b6b6] bg-[#f0f0f0]">
        <svg width="5" height="3" viewBox="0 0 5 3"><path d={i ? "M0 0h5L2.500 3z" : "M0 3h5L2.500 0z"} fill="#8d8d8d" /></svg>
      </div>
    ))}
  </div>
);

const NumBox = ({ v, vw, className }: { v: string; vw: number; className: string }) => (
  <div className={`flex h-[20px] items-center justify-between border border-[#abadb3] bg-[#f0f0f0] pl-px text-[#6d6d6d] ${className}`}>
    <T w={vw} className="-mt-[2px]">{v}</T>
    <Spin />
  </div>
);

const Reset = () => (
  <div className="flex h-[18px] w-[51px] items-center justify-center rounded-[2px] border border-[#adb2b5] bg-[#f4f4f4] pt-[2px] text-[#9a9a9a] shadow-[inset_0_0_0_1px_#fcfcfc]">
    <T w={27}>Reset</T>
  </div>
);

const Group = ({ title, tw, className, children }: { title: string; tw: number; className: string; children: React.ReactNode }) => (
  <div className={`relative rounded-[3px] border border-[#d5dfe5] shadow-[inset_0_0_0_1px_#fff,0_0_0_1px_#fbfbfb] ${className}`}>
    <div className="absolute -top-[8px] left-[5px] bg-[#f0f0f0] px-[2px] leading-[15px] text-[#a0a0a0]">
      <T w={tw}>{title}</T>
    </div>
    {children}
  </div>
);

const Combo = ({ label, lw }: { label: string; lw: number }) => (
  <div className="flex h-[21px] items-center">
    <div className="-mt-[2px] w-[72px]"><T w={lw}>{label}</T></div>
    <div className="flex h-[21px] w-[222px] items-center justify-between rounded-[2px] border border-[#adb2b5] bg-[#f4f4f4] pr-[4px] pl-[3px] text-[#6d6d6d] shadow-[inset_0_0_0_1px_#fcfcfc]">
      <T w={34}>Default</T>
      <Tri c="#a6a6a6" />
    </div>
  </div>
);

function Dialog() {
  return (
    <div className="absolute top-[321px] left-[757px] flex h-[376px] w-[470px] flex-col rounded-t-[6px] border border-black bg-[#b9d1ea] bg-[linear-gradient(180deg,#97b1ce_0px,#b7cfe8_30px,#dce8f5_108px,#dce8f5_119px,#b9d1ea_121px)] px-[7px] pb-[7px] shadow-[inset_-1px_-1px_0_#36c3dc,inset_1px_1px_0_#e8f1fa]">
      <div className="flex h-[29px] shrink-0 items-center pt-[6px]">
        <div className="-mt-[3px] ml-[2px] flex"><Lego s={16} /></div>
        <T w={88} className="ml-[4px] text-black">Neo KCL Creator</T>
        <div className="mb-px ml-auto pr-[2px]"><CaptionButtons active /></div>
      </div>
      <div className="flex h-[24px] shrink-0 items-center bg-linear-to-r from-[#f0f0f0] to-[#fcfcfc] pt-px pl-[15px] text-black">
        <T w={18}>File</T>
        <T w={20} className="ml-[19px]">Edit</T>
      </div>
      <div className="flex flex-1 flex-col bg-[#f0f0f0] px-[12px] pt-[10px] font-['Liberation_Sans',sans-serif] text-[12px] text-[#a0a0a0]">
        <Group title="Octree Settings" tw={73} className="h-[71px] pt-[11px] pl-[7px]">
          <div className="flex h-[20px] items-center">
            <div className="-mt-[2px] w-[123px]"><T w={111}>Max Triangles per Cube</T></div>
            <NumBox v="25" vw={12} className="w-[234px]" />
            <div className="ml-[7px]"><Reset /></div>
          </div>
          <div className="mt-[6px] flex h-[20px] items-center">
            <div className="-mt-[2px] w-[123px]"><T w={68}>Min Cube Size</T></div>
            <NumBox v="8" vw={6} className="w-[234px]" />
            <div className="ml-[7px]"><Reset /></div>
          </div>
        </Group>
        <Group title="Collision Codes" tw={71} className="mt-[14px] flex h-[205px] pt-[11px] pl-[5px]">
          <div className="h-[188px] w-[115px] border border-[#828790] bg-white" />
          <div className="ml-[8px] flex flex-col">
            <div className="flex h-[20px] items-center">
              <div className="-mt-[2px] w-[73px]"><T w={53}>Camera ID:</T></div>
              <NumBox v="255" vw={18} className="w-[222px]" />
            </div>
            <div className="mt-[6px] ml-px flex flex-col gap-[6px]">
              <Combo label="Sound Code:" lw={62} />
              <Combo label="Floor Code:" lw={53} />
              <Combo label="Wall Code:" lw={51} />
            </div>
            <div className="mt-[7px] ml-[73px] flex h-[13px] items-center">
              <div className="h-[13px] w-[13px] border border-[#b1b1b1] bg-[#f8f8f8]" />
              <T w={114} className="mt-px ml-[6px]">Disable Camera Collision</T>
            </div>
          </div>
        </Group>
      </div>
    </div>
  );
}

/* ---------- data ---------- */

const libs: Nav[] = [
  { l: 0, icon: <Library />, text: "Bibliotecas", w: 57 },
  { l: 1, icon: <Doc />, text: "Documentos", w: 68 },
  { l: 1, icon: <Picture />, text: "Imágenes", w: 51 },
  { l: 1, icon: <Music />, text: "Música", w: 38 },
  { l: 1, icon: <Video />, text: "Vídeos", w: 35 },
  null,
  { l: 0, icon: <Computer />, text: "Equipo", w: 37 },
  { l: 1, icon: <Drive win />, text: "Disco local (C:)", w: 79 },
];

const nav1: Nav[] = [
  { l: 0, icon: <Star />, text: "Favoritos", w: 48 },
  { l: 1, icon: <Download />, text: "Descargas", w: 53 },
  { l: 1, icon: <Desktop />, text: "Escritorio", w: 49 },
  { l: 1, icon: <Recent />, text: "Sitios recientes", w: 78 },
  null,
  ...libs,
  { l: 1, icon: <Drive />, text: "Disco extraíble (E:)", w: 96, sel: true },
  null,
  { l: 0, icon: <Network />, text: "Red", w: 20 },
];

const dir = (text: string, w: number, sel = false): Nav => ({ l: 2, icon: <Folder />, text, w, sel });
const nav2: Nav[] = [
  { l: 1, icon: <Recent />, text: "Sitios recientes", w: 78 },
  null,
  ...libs,
  { l: 1, icon: <Drive />, text: "Disco extraíble (E:)", w: 96 },
  dir("arc_convertor", 72),
  dir("btk-conv-1.1.2", 77),
  dir("game-materials", 83),
  dir("j3dview-0.6.1.1", 78),
  dir("launchcamplus", 81),
  dir("models", 39),
  dir("neokclcreate", 67, true),
  dir("superbmd-2.3.0", 83),
  null,
  null,
  dir("WhiteholeSMG1", 84),
];

const files1: FileRow[] = [
  { icon: <Png />, name: "8378294dfcb75ae4f1cbd51c1c8adcf2.png", w: 216, date: "18/08/2022 04:48 a...", type: "Imagen PNG", tw: 67, size: "100 KB", sw: 36 },
  { icon: <Png />, name: "tex1_128x64_c31", w: 84 },
  { icon: <Png />, name: "tex1_128x128_m", w: 83 },
  { icon: <Png />, name: "tex1_512x512_09", w: 84 },
  { icon: <Blank />, name: "tutorial1.bdl", w: 64 },
  { icon: <Blank />, name: "tutorial1.bmd", w: 72 },
  { icon: <Blank />, name: "tutorial1.fbx", w: 64 },
  { icon: <Blank />, name: "tutorial1.mtl", w: 65 },
  { icon: <Blank />, name: "tutorial1.obj", w: 64 },
];

const DATE2 = "27/04/2022 08:34 a...";
const files2: FileRow[] = [
  { icon: <Dll />, name: "Hack.io.BCSV.dll", w: 87, date: DATE2, type: "Archivo DLL", tw: 64, size: "19 KB", sw: 30 },
  { icon: <Dll />, name: "Hack.io.dll", w: 56, date: DATE2, type: "Archivo DLL", tw: 64, size: "28 KB", sw: 30 },
  { icon: <Dll />, name: "Hack.io.KCL.dll", w: 80 },
  { icon: <Dll />, name: "Hack.io.RARC.dll", w: 89 },
  { icon: <Lego s={16} />, name: "NeoKCLCreate.exe", w: 97, sel: true },
  { icon: <Dll />, name: "OpenTK.dll", w: 59 },
  { icon: <Txt />, name: "Presets.txt", w: 53 },
];

const TASKS = [<Chromium />, <Pinwheel />, <Cyg w={30} h={28} />, <Three />, <Pdf />, <Calc />];

const tray = "flex h-[24px] w-[24px] items-center justify-center";

function Taskbar() {
  return (
    <div className="absolute top-0 left-0 flex h-[800px] w-[62px] flex-col border-r border-[#c3d2e2] bg-[linear-gradient(180deg,#8496ad_0px,#8697ae_60px,#a5bedb_108px,#a9c3e0_300px,#a5bfdc_610px,#8394a9_655px,#8394a9_800px)]">
      <div className="flex h-[56px] items-center justify-center"><Orb /></div>
      <div className="flex h-[54px] items-center justify-center"><TaskMgr /></div>
      <div className="flex h-[46px]">
        <div className="flex w-[57px] items-center justify-center rounded-[2px] border border-[#39495d] bg-linear-to-br from-[#dbe5f0] to-[#a9c2de] shadow-[inset_0_0_0_1px_#dfe9f4]"><ExplorerTask /></div>
        <div className="w-[4px] border-y border-r border-[#51647c] bg-[#b9cde3]" />
      </div>
      {TASKS.map((t, i) => (
        <div key={i} className="mt-[2px] flex h-[46px] items-center justify-center">{t}</div>
      ))}
      <div className="mt-[2px] flex h-[46px] items-center justify-center rounded-[2px] border border-[#39495d] bg-linear-to-br from-[#f4f7fa] via-[#dde6ef] to-[#c5d5e7] shadow-[inset_0_0_0_1px_#f3f7fb]"><Lego s={32} /></div>
      <div className="mt-auto flex flex-wrap pl-[8px]">
        <div className={tray}>
          <svg width="15" height="16" viewBox="0 0 15 16"><rect x=".5" y=".5" width="14" height="11" fill="#8b8b8b" /><path d="M.5 12V.5h14" fill="none" stroke="#111" /><path d="M0 14h6M8 14h6" stroke="#222" strokeWidth="2.500" /></svg>
        </div>
        <div className={tray}>
          <svg width="13" height="13" viewBox="0 0 13 13"><circle cx="9.500" cy="9" r="3" fill="#18d818" stroke="#000" /><circle cx="4.500" cy="4.500" r="4" fill="#ffef1e" stroke="#000" /><path d="M3 3v1M6 3v1M2.500 5.500q2 2 4 0" stroke="#000" fill="none" /></svg>
        </div>
        <div className={tray}>
          <svg width="16" height="16" viewBox="0 0 16 16"><path d="M6 1H2v14h5v-3" fill="none" stroke="#fff" strokeWidth="1.800" /><path d="M6 5h8v4q-1 2-3 2v4H9v-4q-3 0-3-2zM8 1v4M12 1v4" fill="#fff" stroke="#4b5866" strokeWidth=".8" /></svg>
        </div>
        <div className={tray}>
          <svg width="17" height="16" viewBox="0 0 17 16"><path d="M2 1h4v4h1v6H5v4H3v-4H1V5h1z" fill="#6a6a6a" stroke="#c5c5c5" strokeWidth=".6" /><circle cx="11.300" cy="10.500" r="5" fill="#2fa436" stroke="#e8f4e8" strokeWidth=".6" /><path d="M8.800 10.500l2 2.500 3-5" fill="none" stroke="#fff" strokeWidth="1.600" /></svg>
        </div>
        <div className={tray}>
          <svg width="16" height="16" viewBox="0 0 16 16"><path d="M1 5h3l4-4v13l-4-4H1z" fill="#fff" stroke="#65717e" strokeWidth=".7" /><circle cx="11" cy="11" r="4" fill="#fff" stroke="#df2a24" strokeWidth="2" /><path d="M8.500 8.500l5 5" stroke="#df2a24" strokeWidth="1.800" /></svg>
        </div>
        <div className={tray}>
          <svg width="16" height="13" viewBox="0 0 16 13" fill="#a9b4c1" stroke="#4b5866" strokeWidth=".8"><rect x=".5" y="10" width="2" height="2.500" fill="#fff" /><rect x="3.600" y="8" width="2" height="4.500" /><rect x="6.700" y="5.500" width="2" height="7" /><rect x="9.800" y="3" width="2" height="9.500" /><rect x="13" y=".5" width="2" height="12" /></svg>
        </div>
        <div className={tray}>
          <svg width="16" height="16" viewBox="0 0 16 16"><path d="M1.500 1v14h1.500V9q3-1 4 .5 3 2 7-1.500l-3-1.500 1-2.500q-3 0-4-2-3-1.500-5-.5V1z" fill="#fff" stroke="#5a6673" strokeWidth=".7" /></svg>
        </div>
      </div>
      <div className="mt-[1px] flex h-[36px] flex-col items-center pr-[2px] text-[#f4f7fa]">
        <T w={54} className="leading-[18px]">06:22 p.m.</T>
        <T w={58} className="-mt-px leading-[17px]">10/09/2022</T>
      </div>
      <div className="h-[14px] border border-[#4c5a6a] bg-[linear-gradient(110deg,#a0abb8,#5f7186_45%,#8fa1b5)] shadow-[inset_0_0_0_1px_#b3c0cd]" />
    </div>
  );
}

const Label = ({ className, w, children }: { className: string; w: number; children: string }) => (
  <div className={`absolute flex h-[48px] items-center justify-center rounded-[2px] bg-white font-['Liberation_Sans',sans-serif] text-[32px] leading-none font-bold text-[#ff0000] shadow-[1px_2px_4px_rgba(0,0,0,.7)] ${className}`}>
    <T w={w}>{children}</T>
  </div>
);

const ARROWS = [
  { shaft: "M173 440L262 349", head: "252,345 274,337 265,358" },
  { shaft: "M446 504L565 406", head: "555,400 577,394 569,414" },
  { shaft: "M579 667L718 621", head: "711,612 735,615 718,630" },
];

export default function App() {
  return (
    <div className="relative h-[800px] w-[1280px] overflow-hidden bg-black font-['Noto_Sans','Open_Sans',sans-serif] text-[12px] leading-[16px]">
      <svg width="430" height="12" viewBox="0 0 430 12" className="absolute top-[5px] left-[90px]">
        <path d="M7 7l20 2v3H7z" fill="#ddd" />
        <path d="M95 5l27-1v8H95z" fill="#ddd" /><path d="M98 7h21v5H98z" fill="#22308e" />
        <path d="M183 3h23v9h-23z" fill="#dc2a20" /><path d="M208 3h18v9h-18z" fill="#33b52e" />
        <path d="M277 2l28 6v4h-28zM370 2l28 6v4h-28z" fill="#f4e199" />
      </svg>
      <div className="absolute top-[7px] left-[1202px]"><BigFolder /></div>
      <T w={88} className="absolute top-[58px] left-[1180px] text-white">Browsers Backup</T>
      <div className="absolute top-[140px] left-[1202px]"><BigFolder /></div>
      <span className="absolute top-[191px] left-[1258px] text-white">...</span>
      <span className="absolute top-[323px] left-[1258px] text-white">...</span>
      <span className="absolute top-[590px] left-[65px] text-white">M</span>

      <div className="absolute top-[674px] left-[67px] flex w-[80px] flex-col items-center text-white">
        <div className="relative h-[46px] w-[46px] pt-[1px] pl-[3px]"><Cyg w={42} h={39} /><Shortcut /></div>
        <T w={40} className="mt-[3px] leading-[15px]">Cygwin</T>
        <T w={47} className="leading-[15px]">Terminal</T>
      </div>
      <div className="absolute top-[674px] left-[160px] flex w-[80px] flex-col items-center text-white">
        <div className="relative h-[46px] w-[46px]"><Notepad /><Shortcut /></div>
        <T w={61} className="mt-[3px] leading-[15px]">Notepad++</T>
      </div>
      <div className="absolute top-[674px] left-[254px] flex w-[80px] flex-col items-center text-white">
        <div className="relative h-[46px] w-[46px]"><Penguin /><Shortcut /></div>
        <T w={52} className="mt-[3px] leading-[15px]">Penguins!</T>
      </div>
      <div className="absolute top-[672px] left-[361px] flex w-[60px] flex-col items-start text-white">
        <div className="pl-[4px]"><BigFolder /></div>
        <T className="mt-[3px] leading-[15px]">360Ext</T>
        <T className="pl-[4px] leading-[15px]">(Source)</T>
      </div>

      <Explorer
        id="backA"
        className="top-[14px] left-[73px]"
        folder="tutorial"
        fw={38}
        sw={77}
        navTop="pt-[9px]"
        nav={nav1}
        files={files1}
        tools={
          <>
            <T w={51}>Organizar</T>
            <div className="ml-[5px] flex"><Tri /></div>
            <T w={77} className="ml-[31px]">Compartir con</T>
            <div className="ml-[5px] flex"><Tri /></div>
            <T w={35} className="ml-[31px]">Grabar</T>
            <T w={76} className="ml-[30px]">Nueva carpeta</T>
          </>
        }
        details={
          <>
            <div className="mt-[3px] ml-[18px] h-[46px] w-[40px]"><BigFolder docs={false} /></div>
            <T w={72} className="mt-[7px] ml-[20px] text-[#1e395b]">9 elementos</T>
          </>
        }
      />

      <Explorer
        id="backB"
        className="top-[164px] left-[384px]"
        folder="neokclcreate"
        fw={67}
        sw={103}
        navTop="pt-0"
        nav={nav2}
        files={files2}
        scroll={
          <div className="flex w-[17px] shrink-0 flex-col items-center justify-between bg-[#f1f1f1] py-[7px]">
            <svg width="7" height="4" viewBox="0 0 7 4"><path d="M0 4h7L3.500 0z" fill="#3c3c3c" /></svg>
            <div className="mt-[53px] mb-[70px] flex w-[15px] flex-1 flex-col items-center justify-center gap-[1px] rounded-[2px] border border-[#979797] bg-linear-to-r from-[#f5f5f5] via-[#dcdcdc] to-[#c6c6c6]">
              <div className="h-[2px] w-[7px] border-b border-white bg-[#5c5c5c]" />
              <div className="h-[2px] w-[7px] border-b border-white bg-[#5c5c5c]" />
              <div className="h-[2px] w-[7px] border-b border-white bg-[#5c5c5c]" />
            </div>
            <svg width="7" height="4" viewBox="0 0 7 4"><path d="M0 0h7L3.500 4z" fill="#3c3c3c" /></svg>
          </div>
        }
        tools={
          <>
            <T w={51}>Organizar</T>
            <div className="ml-[5px] flex"><Tri /></div>
            <svg width="16" height="13" viewBox="0 0 16 13" className="ml-[31px]">
              <rect x=".5" y=".5" width="15" height="12" fill="#fff" stroke="#7b8794" />
              <path d="M1 1.500h14" stroke="#a9b4c0" strokeWidth="2" />
              <path d="M2 4h6v6H2z" fill="#3b8a7a" />
              <path d="M9.500 5h3M9.500 7h3M9.500 9h3" stroke="#9aa5b0" />
              <path d="M14 4v6" stroke="#7b8794" />
            </svg>
            <T w={26} className="ml-[4px]">Abrir</T>
            <T w={35} className="ml-[30px]">Grabar</T>
            <T w={76} className="ml-[30px]">Nueva carpeta</T>
          </>
        }
        details={
          <>
            <div className="mt-[2px] ml-[17px]"><Lego s={44} /></div>
            <div className="mt-[7px] ml-[16px] flex flex-col items-start gap-[2px]">
              <T w={108} className="text-black">NeoKCLCreate.exe</T>
              <T w={56} className="text-[#5a6779]">Aplicación</T>
            </div>
            <div className="mt-[7px] ml-[8px] flex w-[106px] flex-col items-end gap-[2px] text-[#5a6779]">
              <T w={106}>Fecha de modifica...</T>
              <T w={46}>Tamaño:</T>
            </div>
            <div className="mt-[7px] ml-[5px] flex flex-col items-start gap-[2px] text-[#1e395b]">
              <T w={114}>27/04/2022 08:34 a.m.</T>
              <T w={38}>46,0 KB</T>
            </div>
            <T w={98} className="mt-[7px] ml-[23px] text-[#5a6779]">Fecha de creación:</T>
            <T w={115} className="mt-[7px] ml-[5px] text-[#1e395b]">01/09/2022 10:55 p.m.</T>
          </>
        }
      />

      <Dialog />
      <Taskbar />

      <Label className="top-[460px] left-[99px] w-[130px]" w={116}>OBJ file</Label>
      <Label className="top-[494px] left-[300px] w-[128px]" w={115}>EXE file</Label>
      <Label className="top-[653px] left-[333px] w-[231px]" w={218}>NeoKCLCreate</Label>
      <svg width="1280" height="800" viewBox="0 0 1280 800" className="pointer-events-none absolute top-0 left-0 drop-shadow-[2px_3px_2px_rgba(0,0,0,.6)]">
        {ARROWS.map((a) => (
          <g key={a.shaft} stroke="#ff0000" fill="#ff0000" strokeLinecap="round" strokeLinejoin="round">
            <path d={a.shaft} strokeWidth="10" />
            <polygon points={a.head} strokeWidth="8" />
          </g>
        ))}
      </svg>
    </div>
  );
}
